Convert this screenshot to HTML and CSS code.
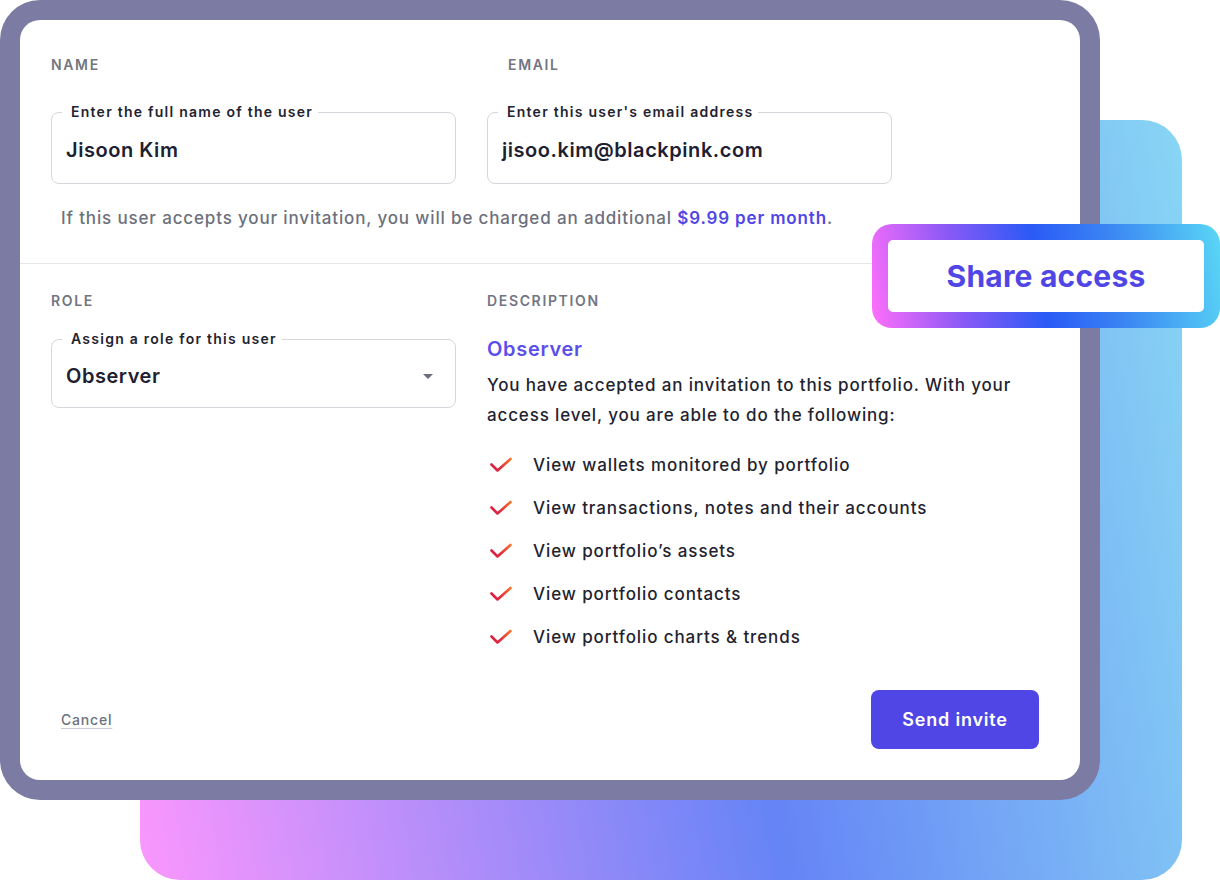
FILE: index.html
```html
<!DOCTYPE html>
<html lang="en">
<head>
<meta charset="utf-8">
<title>Share access</title>
<link rel="stylesheet" href="styles.css">
</head>
<body>
<div class="stage">
  <div class="backdrop"></div>
  <div class="frame">
    <div class="card">
      <section class="top">
        <div class="cols">
          <div class="col">
            <div class="label">NAME</div>
            <fieldset class="field">
              <legend>Enter the full name of the user</legend>
              <div class="value">Jisoon Kim</div>
            </fieldset>
          </div>
          <div class="col">
            <div class="label label-email">EMAIL</div>
            <fieldset class="field">
              <legend>Enter this user's email address</legend>
              <div class="value">jisoo.kim@blackpink.com</div>
            </fieldset>
          </div>
        </div>
        <p class="note">If this user accepts your invitation, you will be charged an additional <span class="price">$9.99 per month</span>.</p>
      </section>
      <section class="middle">
        <div class="cols cols-wide">
          <div class="col">
            <div class="label">ROLE</div>
            <fieldset class="field select">
              <legend>Assign a role for this user</legend>
              <div class="value select-row"><span>Observer</span><span class="caret"></span></div>
            </fieldset>
          </div>
          <div class="col">
            <div class="label">DESCRIPTION</div>
            <h3 class="role-title">Observer</h3>
            <p class="role-desc">You have accepted an invitation to this portfolio. With your access level, you are able to do the following:</p>
            <ul class="perms">
              <li><svg class="check" viewBox="0 0 24 16" width="24" height="16"><defs><linearGradient id="cg" x1="0" y1="0" x2="1" y2="0"><stop offset="0" stop-color="#d9203f"/><stop offset="0.45" stop-color="#e0283f"/><stop offset="1" stop-color="#f7702c"/></linearGradient></defs><path d="M2.5 7.5 L8.5 13.5 L21.5 2" fill="none" stroke="url(#cg)" stroke-width="2.6" stroke-linecap="round" stroke-linejoin="round"/></svg><span>View wallets monitored by portfolio</span></li>
              <li><svg class="check" viewBox="0 0 24 16" width="24" height="16"><path d="M2.5 7.5 L8.5 13.5 L21.5 2" fill="none" stroke="url(#cg)" stroke-width="2.6" stroke-linecap="round" stroke-linejoin="round"/></svg><span>View transactions, notes and their accounts</span></li>
              <li><svg class="check" viewBox="0 0 24 16" width="24" height="16"><path d="M2.5 7.5 L8.5 13.5 L21.5 2" fill="none" stroke="url(#cg)" stroke-width="2.6" stroke-linecap="round" stroke-linejoin="round"/></svg><span>View portfolio’s assets</span></li>
              <li><svg class="check" viewBox="0 0 24 16" width="24" height="16"><path d="M2.5 7.5 L8.5 13.5 L21.5 2" fill="none" stroke="url(#cg)" stroke-width="2.6" stroke-linecap="round" stroke-linejoin="round"/></svg><span>View portfolio contacts</span></li>
              <li><svg class="check" viewBox="0 0 24 16" width="24" height="16"><path d="M2.5 7.5 L8.5 13.5 L21.5 2" fill="none" stroke="url(#cg)" stroke-width="2.6" stroke-linecap="round" stroke-linejoin="round"/></svg><span>View portfolio charts &amp; trends</span></li>
            </ul>
          </div>
        </div>
      </section>
      <footer class="footer">
        <a class="cancel" href="#">Cancel</a>
        <button class="send" type="button">Send invite</button>
      </footer>
    </div>
  </div>
  <div class="badge"><div class="badge-inner">Share access</div></div>
</div>
</body>
</html>
```

FILE: styles.css
```css
* { box-sizing: border-box; }
html, body { margin: 0; padding: 0; background: #ffffff; }
body {
  width: 1220px;
  height: 880px;
  overflow: hidden;
  font-family: Inter, "Noto Sans", "DejaVu Sans", sans-serif;
  color: #1f2330;
}
.stage {
  position: relative;
  width: 1220px;
  height: 880px;
}
.backdrop {
  position: absolute;
  left: 140px;
  top: 120px;
  width: 1042px;
  height: 760px;
  border-radius: 40px;
  background: linear-gradient(80deg, #fa97fd 0%, #a98cf9 30%, #6584f6 55%, #77aef5 78%, #88d6f4 100%);
}
.frame {
  position: relative;
  width: 1100px;
  height: 800px;
  padding: 20px;
  background: #7c7ba4;
  border-radius: 40px;
}
.card {
  height: 760px;
  background: #ffffff;
  border-radius: 20px;
  display: flex;
  flex-direction: column;
}
.cols {
  display: grid;
  grid-template-columns: 405px 405px;
  column-gap: 31px;
}
.cols-wide { grid-template-columns: 405px 1fr; }
.col { display: flex; flex-direction: column; min-width: 0; }
.top {
  padding: 37px 31px 0 31px;
  height: 244px;
  border-bottom: 1px solid #e6e7eb;
}
.label {
  font-size: 14px;
  line-height: 16px;
  font-weight: 600;
  letter-spacing: 1.65px;
  color: #727582;
}
.label-email { padding-left: 21px; }
.field {
  margin: 30px 0 0 0;
  padding: 0 14px;
  border: 1px solid #d4d6dc;
  border-radius: 8px;
  min-width: 0;
}
.field legend {
  margin-left: -4px;
  padding: 0 5px 0 9px;
  font-size: 14px;
  line-height: 18px;
  font-weight: 600;
  letter-spacing: 1.25px;
  color: #1f2330;
}
.value {
  padding: 15px 0 19px 0;
  font-size: 20px;
  line-height: 28px;
  font-weight: 600;
  letter-spacing: 0.55px;
  color: #1d2031;
}
.note {
  margin: 22px 0 0 10px;
  font-size: 17px;
  line-height: 24px;
  font-weight: 500;
  letter-spacing: 0.85px;
  color: #6c707c;
}
.price { color: #5046e5; font-weight: 600; }
.middle {
  flex: 1;
  padding: 29px 31px 0 31px;
}
.select { margin-top: 21px; }
.select .value { padding: 14px 0 17px 0; }
.select-row {
  display: flex;
  align-items: center;
  justify-content: space-between;
  padding-right: 10px;
}
.caret {
  width: 0;
  height: 0;
  border-left: 5.5px solid transparent;
  border-right: 5.5px solid transparent;
  border-top: 5px solid #6b6f7b;
  margin-right: 8px;
}
.role-title {
  margin: 26px 0 0 0;
  font-size: 20px;
  line-height: 28px;
  font-weight: 600;
  letter-spacing: 0.7px;
  color: #5b4fea;
}
.role-desc {
  margin: 7px 0 0 0;
  font-size: 17px;
  line-height: 30px;
  font-weight: 500;
  letter-spacing: 0.85px;
  color: #1f2330;
  width: 545px;
}
.perms {
  list-style: none;
  margin: 23px 0 0 0;
  padding: 0;
  display: flex;
  flex-direction: column;
  gap: 19px;
}
.perms li {
  display: flex;
  align-items: center;
  gap: 20px;
  font-size: 17px;
  line-height: 24px;
  font-weight: 500;
  letter-spacing: 0.9px;
  color: #1f2330;
  padding-left: 2px;
  white-space: nowrap;
}
.check { flex: none; }
.footer {
  display: flex;
  align-items: center;
  justify-content: space-between;
  padding: 0 41px 31px 41px;
}
.cancel {
  font-size: 14px;
  font-weight: 500;
  letter-spacing: 0.8px;
  color: #6b7080;
  text-decoration: underline;
  text-decoration-color: #c9ccd3;
  text-underline-offset: 3px;
}
.send {
  width: 168px;
  height: 59px;
  border: none;
  border-radius: 8px;
  background: #4f46e5;
  color: #ffffff;
  font-family: Inter, "Noto Sans", sans-serif;
  font-size: 18px;
  font-weight: 600;
  letter-spacing: 0.8px;
}
.badge {
  position: absolute;
  left: 872px;
  top: 224px;
  width: 348px;
  height: 104px;
  padding: 16px;
  border-radius: 20px;
  background: linear-gradient(80deg, #ff6ffa 0%, #8a59f6 25%, #2a5af6 48%, #3b87f3 70%, #5ad7f5 100%);
}
.badge-inner {
  height: 100%;
  background: #ffffff;
  border-radius: 5px;
  display: flex;
  align-items: center;
  justify-content: center;
  font-size: 30px;
  font-weight: 700;
  color: #4f46e5;
  letter-spacing: 0.2px;
}
```
